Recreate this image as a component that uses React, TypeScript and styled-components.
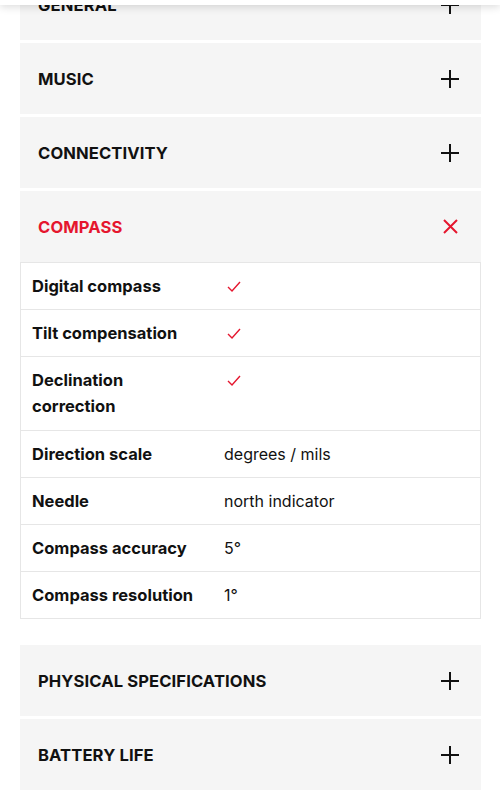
import React from "react";
import styled, { createGlobalStyle } from "styled-components";

const RED = "#e5162e";

const GlobalStyle = createGlobalStyle`
  html, body {
    margin: 0;
    padding: 0;
    background: #ffffff;
  }
  body {
    font-family: Inter, "Liberation Sans", sans-serif;
    color: #111111;
    -webkit-font-smoothing: antialiased;
  }
`;

const Viewport = styled.div`
  height: 800px;
  overflow: hidden;
  position: relative;
`;

const TopBar = styled.header`
  position: fixed;
  top: -55px;
  left: 0;
  right: 0;
  height: 60px;
  background: #ffffff;
  box-shadow: 0 2px 8px rgba(0, 0, 0, 0.14);
  z-index: 2;
`;

const SpecList = styled.div`
  margin: -31px 19px 0 20px;
  display: flex;
  flex-direction: column;
`;

const Section = styled.section<{ $spaced?: boolean }>`
  margin-top: ${(p) => (p.$spaced ? "26px" : "3px")};
  &:first-child {
    margin-top: 0;
  }
`;

const PanelHeader = styled.div`
  height: 71px;
  background: #f5f5f5;
  display: flex;
  align-items: center;
  justify-content: space-between;
  padding: 0 22px 0 18px;
  box-sizing: border-box;
`;

const PanelTitle = styled.h3<{ $open?: boolean }>`
  margin: 0;
  font-size: 16.6px;
  font-weight: 700;
  letter-spacing: 0.1px;
  text-transform: uppercase;
  color: ${(p) => (p.$open ? RED : "#111111")};
`;

const IconSlot = styled.span`
  width: 18px;
  height: 18px;
  display: flex;
  align-items: center;
  justify-content: center;
`;

const SpecTable = styled.div`
  border: 1px solid #e6e6e6;
  border-top: 0;
  background: #ffffff;
`;

const SpecRow = styled.div`
  display: grid;
  grid-template-columns: 192px 1fr;
  border-top: 1px solid #e6e6e6;
`;

const Cell = styled.div<{ $label?: boolean }>`
  padding: 10px 11px 10.2px;
  font-size: ${(p) => (p.$label ? "16.5px" : "16px")};
  line-height: 26px;
  font-weight: ${(p) => (p.$label ? 700 : 400)};
  color: #111111;
`;

const CheckWrap = styled.span`
  display: inline-flex;
  padding: 2px 0 0 3px;
`;

const PlusIcon = () => (
  <svg width="18" height="18" viewBox="0 0 18 18">
    <path d="M9 0v18M0 9h18" stroke="#111" strokeWidth="2" fill="none" />
  </svg>
);

const CloseIcon = () => (
  <svg width="15" height="15" viewBox="0 0 15 15">
    <path d="M1 1l13 13M14 1L1 14" stroke={RED} strokeWidth="2" fill="none" />
  </svg>
);

const Check = () => (
  <CheckWrap>
    <svg width="14" height="11" viewBox="0 0 14 11">
      <path d="M1 6l4 4 8-9" stroke={RED} strokeWidth="1.4" fill="none" />
    </svg>
  </CheckWrap>
);

type Spec = { label: string; value?: string; check?: boolean };

const compassSpecs: Spec[] = [
  { label: "Digital compass", check: true },
  { label: "Tilt compensation", check: true },
  { label: "Declination correction", check: true },
  { label: "Direction scale", value: "degrees / mils" },
  { label: "Needle", value: "north indicator" },
  { label: "Compass accuracy", value: "5°" },
  { label: "Compass resolution", value: "1°" },
];

const Accordion = ({
  title,
  open,
  spaced,
  specs,
}: {
  title: string;
  open?: boolean;
  spaced?: boolean;
  specs?: Spec[];
}) => (
  <Section $spaced={spaced}>
    <PanelHeader>
      <PanelTitle $open={open}>{title}</PanelTitle>
      <IconSlot>{open ? <CloseIcon /> : <PlusIcon />}</IconSlot>
    </PanelHeader>
    {open && specs && (
      <SpecTable>
        {specs.map((s) => (
          <SpecRow key={s.label}>
            <Cell $label>{s.label}</Cell>
            <Cell>{s.check ? <Check /> : s.value}</Cell>
          </SpecRow>
        ))}
      </SpecTable>
    )}
  </Section>
);

export default function App() {
  return (
    <Viewport>
      <GlobalStyle />
      <TopBar />
      <SpecList>
        <Accordion title="General" />
        <Accordion title="Music" />
        <Accordion title="Connectivity" />
        <Accordion title="Compass" open specs={compassSpecs} />
        <Accordion title="Physical specifications" spaced />
        <Accordion title="Battery life" />
      </SpecList>
    </Viewport>
  );
}
